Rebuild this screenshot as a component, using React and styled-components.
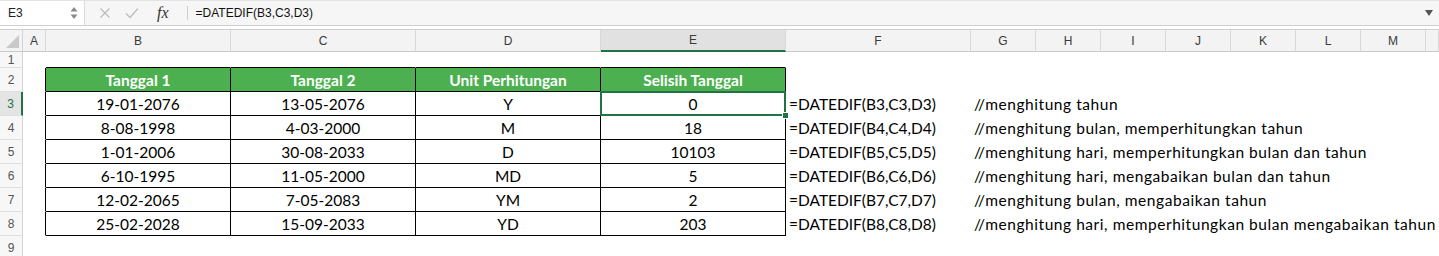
import React from 'react'
import styled, { createGlobalStyle, css } from 'styled-components'

const GREEN = '#217346'

const GlobalStyle = createGlobalStyle`
  html, body {
    margin: 0;
    padding: 0;
    background: #ffffff;
  }
  body {
    font-family: 'Liberation Sans', Arial, sans-serif;
    overflow: hidden;
  }
`

const Page = styled.div`
  width: 1439px;
  height: 256px;
  overflow: hidden;
  background: #fff;
`
const FormulaBar = styled.div`
  display: flex;
  align-items: center;
  height: 26px;
  border-top: 1px solid #e3e3e3;
  border-bottom: 1px solid #cfcfcf;
  background: #f6f6f6;
  box-sizing: border-box;
`
const NameBox = styled.div`
  display: flex;
  align-items: center;
  justify-content: space-between;
  width: 85px;
  height: 100%;
  padding: 0 6px 0 8px;
  box-sizing: border-box;
  background: #fff;
  border-right: 1px solid #dcdcdc;
  font-size: 12px;
  color: #222;
`
const Tools = styled.div`
  display: flex;
  align-items: center;
  gap: 14px;
  padding: 0 8px 0 14px;
  height: 100%;
`
const Fx = styled.span`
  font-family: 'Liberation Serif', serif;
  font-style: italic;
  font-size: 16px;
  color: #333;
  margin-left: 4px;
`
const Sep = styled.span`
  width: 1px;
  height: 14px;
  background: #cfcfcf;
  margin-left: 4px;
`
const Input = styled.div`
  flex: 1;
  display: flex;
  align-items: center;
  justify-content: space-between;
  height: 100%;
  padding: 0 6px 0 0;
  font-size: 12px;
  color: #111;
`
const Gap = styled.div`
  height: 3px;
  border-bottom: 1px solid #d0d0d0;
  background: #fff;
`
const Row = styled.div`
  display: flex;
  height: ${(p) => p.h}px;
`
const Corner = styled.div`
  position: relative;
  width: 23px;
  flex-shrink: 0;
  background: #f3f3f3;
  border-right: 1px solid #d4d4d4;
  border-bottom: 1px solid #c8c8c8;
  box-sizing: border-box;
  svg {
    position: absolute;
    right: 3px;
    bottom: 3px;
  }
`
const ColHead = styled.div`
  width: ${(p) => (p.w ? `${p.w}px` : 'auto')};
  flex: ${(p) => (p.w ? '0 0 auto' : '1')};
  display: flex;
  align-items: center;
  justify-content: center;
  box-sizing: border-box;
  font-size: 12px;
  color: #3a3a3a;
  background: ${(p) => (p.active ? '#e1e1e1' : '#f3f3f3')};
  border-right: 1px solid #d8d8d8;
  border-bottom: ${(p) => (p.active ? `2px solid ${GREEN}` : '1px solid #c8c8c8')};
`
const RowHead = styled.div`
  width: 23px;
  flex-shrink: 0;
  display: flex;
  align-items: center;
  justify-content: center;
  box-sizing: border-box;
  font-size: 12px;
  color: ${(p) => (p.active ? GREEN : '#555')};
  background: ${(p) => (p.active ? '#e4e4e4' : '#f7f7f7')};
  border-bottom: 1px solid #dedede;
  border-right: ${(p) => (p.active ? `2px solid ${GREEN}` : '1px solid #d4d4d4')};
`
const Cell = styled.div`
  position: relative;
  width: ${(p) => (p.w ? `${p.w}px` : 'auto')};
  flex: ${(p) => (p.w ? '0 0 auto' : '1')};
  display: flex;
  align-items: center;
  justify-content: ${(p) => (p.center ? 'center' : 'flex-start')};
  box-sizing: border-box;
  padding: ${(p) => (p.center ? '0' : '0 0 0 3px')};
  white-space: nowrap;
  font-family: Lato, 'Liberation Sans', sans-serif;
  font-size: 15.5px;
  letter-spacing: ${(p) => (p.note ? '0.55px' : 'normal')};
  color: #000;
  border-right: 1px solid ${(p) => (p.line ? '#000' : 'transparent')};
  border-bottom: 1px solid ${(p) => (p.lineBottom ? '#000' : 'transparent')};
  ${(p) =>
    p.head &&
    css`
      background: #4caf50;
      color: #fff;
      font-weight: 700;
    `}
  ${(p) =>
    p.selected &&
    css`
      &::after {
        content: '';
        position: absolute;
        top: -1px;
        left: -1px;
        right: -1px;
        bottom: -1px;
        border: 2px solid ${GREEN};
      }
      &::before {
        content: '';
        position: absolute;
        right: -4px;
        bottom: -4px;
        width: 5px;
        height: 5px;
        background: ${GREEN};
        border: 1px solid #fff;
        z-index: 2;
      }
    `}
`

const COLS = [
  ['A', 23],
  ['B', 185],
  ['C', 185],
  ['D', 185],
  ['E', 185],
  ['F', 185],
  ['G', 65],
  ['H', 65],
  ['I', 65],
  ['J', 65],
  ['K', 65],
  ['L', 65],
  ['M', 65],
  ['', 0],
]

const HEAD = ['Tanggal 1', 'Tanggal 2', 'Unit Perhitungan', 'Selisih Tanggal']

const DATA = [
  ['19-01-2076', '13-05-2076', 'Y', '0', '=DATEDIF(B3,C3,D3)', '//menghitung tahun'],
  ['8-08-1998', '4-03-2000', 'M', '18', '=DATEDIF(B4,C4,D4)', '//menghitung bulan, memperhitungkan tahun'],
  ['1-01-2006', '30-08-2033', 'D', '10103', '=DATEDIF(B5,C5,D5)', '//menghitung hari, memperhitungkan bulan dan tahun'],
  ['6-10-1995', '11-05-2000', 'MD', '5', '=DATEDIF(B6,C6,D6)', '//menghitung hari, mengabaikan bulan dan tahun'],
  ['12-02-2065', '7-05-2083', 'YM', '2', '=DATEDIF(B7,C7,D7)', '//menghitung bulan, mengabaikan tahun'],
  ['25-02-2028', '15-09-2033', 'YD', '203', '=DATEDIF(B8,C8,D8)', '//menghitung hari, memperhitungkan bulan mengabaikan tahun'],
]

function Spinner() {
  return (
    <svg width="8" height="16" viewBox="0 0 8 16">
      <path d="M4 2 L7.5 6.5 H0.5 Z" fill="#8a8a8a" />
      <path d="M4 14 L7.5 9.5 H0.5 Z" fill="#8a8a8a" />
    </svg>
  )
}

function Cross() {
  return (
    <svg width="12" height="12" viewBox="0 0 12 12">
      <path d="M1.5 1.5 L10.5 10.5 M10.5 1.5 L1.5 10.5" stroke="#bdbdbd" strokeWidth="1.3" />
    </svg>
  )
}

function Check() {
  return (
    <svg width="14" height="12" viewBox="0 0 14 12">
      <path d="M1 6.5 L5 10.5 L13 1.5" stroke="#bdbdbd" strokeWidth="1.3" fill="none" />
    </svg>
  )
}

function SheetRow({ n, h, active, children }) {
  return (
    <Row h={h}>
      <RowHead active={active}>{n}</RowHead>
      {children}
    </Row>
  )
}

export default function App() {
  return (
    <Page>
      <GlobalStyle />
      <FormulaBar>
        <NameBox>
          E3
          <Spinner />
        </NameBox>
        <Tools>
          <Cross />
          <Check />
          <Fx>fx</Fx>
          <Sep />
        </Tools>
        <Input>
          =DATEDIF(B3,C3,D3)
          <svg width="8" height="6" viewBox="0 0 8 6">
            <path d="M0 0 H8 L4 6 Z" fill="#555" />
          </svg>
        </Input>
      </FormulaBar>
      <Gap />

      <Row h={22}>
        <Corner>
          <svg width="13" height="13" viewBox="0 0 13 13">
            <path d="M13 0 V13 H0 Z" fill="#c9c9c9" />
          </svg>
        </Corner>
        {COLS.map(([c, w], i) => (
          <ColHead key={i} w={w} active={c === 'E'}>
            {c}
          </ColHead>
        ))}
      </Row>

      <SheetRow n={1} h={16}>
        {COLS.map(([c, w], i) => (
          <Cell key={i} w={w} lineBottom={i >= 1 && i <= 4} />
        ))}
      </SheetRow>

      <SheetRow n={2} h={24}>
        {COLS.map(([c, w], i) => (
          <Cell
            key={i}
            w={w}
            center
            head={i >= 1 && i <= 4}
            line={i <= 4}
            lineBottom={i >= 1 && i <= 4}
          >
            {i >= 1 && i <= 4 ? HEAD[i - 1] : null}
          </Cell>
        ))}
      </SheetRow>

      {DATA.map((r, ri) => (
        <SheetRow key={ri} n={ri + 3} h={24} active={ri === 0}>
          {COLS.map(([c, w], i) => {
            const inTable = i >= 1 && i <= 4
            let text = null
            if (inTable) text = r[i - 1]
            if (i === 5) text = r[4]
            if (i === 6) text = r[5]
            return (
              <Cell
                key={i}
                w={w}
                center={inTable}
                note={i === 6}
                line={i <= 4}
                lineBottom={inTable}
                selected={ri === 0 && i === 4}
              >
                {text}
              </Cell>
            )
          })}
        </SheetRow>
      ))}

      <SheetRow n={9} h={24}>
        {COLS.map(([c, w], i) => (
          <Cell key={i} w={w} />
        ))}
      </SheetRow>
    </Page>
  )
}
